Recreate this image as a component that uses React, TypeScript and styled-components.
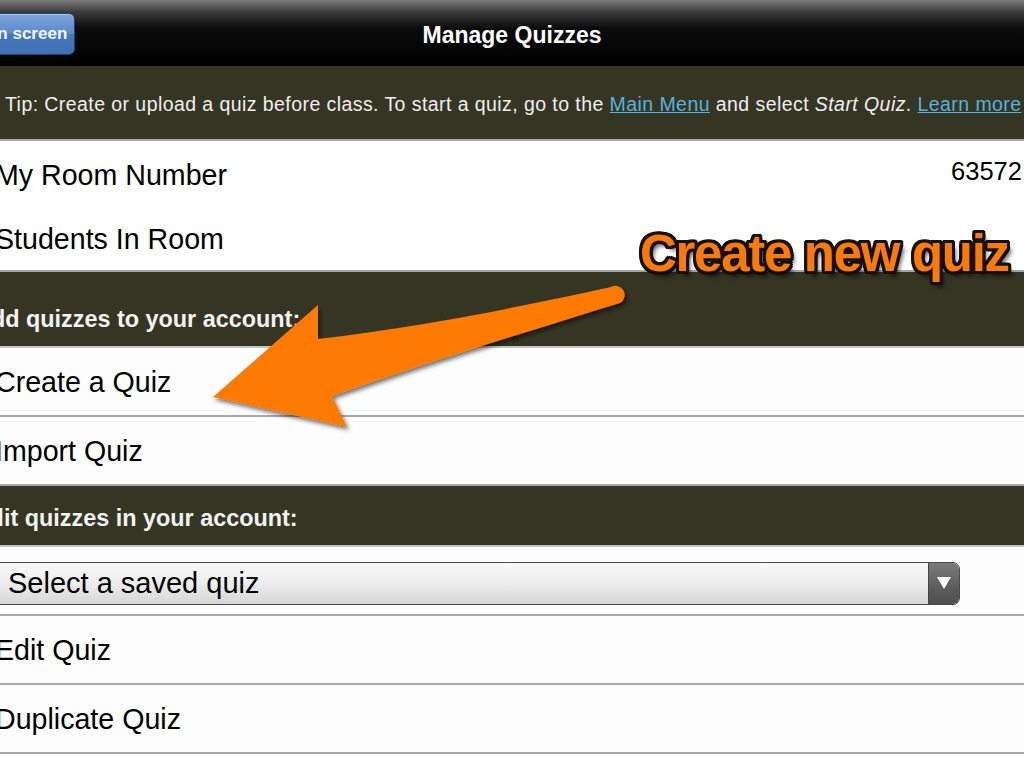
import React from "react";
import styled, { createGlobalStyle } from "styled-components";

const GlobalStyle = createGlobalStyle`
  html, body {
    margin: 0;
    padding: 0;
    background: #fff;
  }
  body {
    font-family: "Liberation Sans", Arial, sans-serif;
  }
`;

const olive = "#353523";

export default function App() {
  return (
    <Frame>
      <GlobalStyle />
      <TopBar>
        <BarSide>
          <BackButton>Main screen</BackButton>
        </BarSide>
        <Title>Manage Quizzes</Title>
        <BarSide />
      </TopBar>

      <TipBar>
        Tip: Create or upload a quiz before class. To start a quiz, go to the&nbsp;
        <TipLink>Main Menu</TipLink>&nbsp;and select&nbsp;<em>Start Quiz</em>.&nbsp;
        <TipLink>Learn more</TipLink>
      </TipBar>

      <InfoGroup>
        <InfoRow>
          <Label>My Room Number</Label>
          <Value>63572</Value>
        </InfoRow>
        <InfoRow>
          <Label>Students In Room</Label>
        </InfoRow>
      </InfoGroup>

      <SectionHeader $tall>Add quizzes to your account:</SectionHeader>
      <Row>
        <Label>Create a Quiz</Label>
      </Row>
      <Row>
        <Label>Import Quiz</Label>
      </Row>

      <SectionHeader>Edit quizzes in your account:</SectionHeader>
      <Row>
        <Select>
          <SelectText>Select a saved quiz</SelectText>
          <SelectArrow>
            <svg width="16" height="14" viewBox="0 0 16 14">
              <path d="M1 1 L15 1 L8 13 Z" fill="#fff" />
            </svg>
          </SelectArrow>
        </Select>
      </Row>
      <Row>
        <Label>Edit Quiz</Label>
      </Row>
      <Row>
        <Label>Duplicate Quiz</Label>
      </Row>

      <ArrowLayer viewBox="0 0 1024 768" width="1024" height="768">
        <defs>
          <filter id="shadow" x="-10%" y="-10%" width="130%" height="130%">
            <feDropShadow dx="2" dy="3" stdDeviation="2" floodColor="#000" floodOpacity="0.55" />
          </filter>
        </defs>
        <path
          d="M 611 287 C 520 307, 420 327, 318 339 L 318 305 L 213 397 L 347 427 L 332 396 C 430 361, 530 331, 620 303 A 8 8 0 0 0 611 287 Z"
          fill="#ff7a00"
          filter="url(#shadow)"
        />
      </ArrowLayer>
      <Callout>Create new quiz</Callout>
    </Frame>
  );
}

const Frame = styled.div`
  position: relative;
  width: 1024px;
  height: 768px;
  overflow: hidden;
  background: #fff;
`;

const TopBar = styled.header`
  height: 66px;
  box-sizing: border-box;
  padding-top: 4px;
  display: grid;
  grid-template-columns: 1fr auto 1fr;
  align-items: center;
  background: linear-gradient(#7c7c7c 0, #3c3c3c 12px, #0c0c0c 28px, #000 100%);
`;

const BarSide = styled.div`
  display: flex;
  align-items: center;
`;

const BackButton = styled.div`
  margin-left: -42px;
  height: 40px;
  margin-top: -2px;
  padding: 0 7px 0 10px;
  display: flex;
  align-items: center;
  border-radius: 6px;
  border: 1px solid #1f3f6e;
  background: linear-gradient(#7ea6dc 0%, #5a88c9 50%, #4677bd 51%, #3f6fb4 100%);
  color: #f4f8ff;
  font-size: 17px;
  font-weight: bold;
  box-shadow: inset 0 1px 0 rgba(255, 255, 255, 0.35);
`;

const Title = styled.h1`
  margin: 0;
  color: #fff;
  font-size: 23px;
  font-weight: bold;
`;

const TipBar = styled.div`
  height: 75px;
  box-sizing: border-box;
  padding: 4px 0 0 5px;
  display: flex;
  align-items: center;
  white-space: nowrap;
  background: ${olive};
  border-bottom: 2px solid #a9a9a9;
  color: #efefef;
  font-size: 19.5px;
  letter-spacing: 0.43px;

  em {
    font-style: italic;
  }
`;

const TipLink = styled.span`
  color: #52b4dc;
  text-decoration: underline;
`;

const InfoGroup = styled.section`
  background: #fff;
  border-bottom: 2px solid #a4a4a4;
`;

const InfoRow = styled.div`
  height: 64.5px;
  box-sizing: border-box;
  padding-top: 4px;
  display: flex;
  align-items: center;
  justify-content: space-between;
`;

const Label = styled.span`
  margin-left: -5px;
  color: #000;
  font-size: 28.6px;
  white-space: nowrap;
`;

const Value = styled.span`
  margin-right: 2px;
  margin-top: -8px;
  color: #000;
  font-size: 25.5px;
`;

const SectionHeader = styled.h2<{ $tall?: boolean }>`
  margin: 0;
  height: ${(p) => (p.$tall ? 76 : 61)}px;
  box-sizing: border-box;
  display: flex;
  align-items: flex-end;
  padding-bottom: 13px;
  text-indent: -26px;
  background: ${olive};
  border-bottom: 2px solid #c4c4c4;
  color: #f3f3f3;
  font-size: 23.4px;
  font-weight: bold;
  white-space: nowrap;
`;

const Row = styled.div`
  height: 69px;
  box-sizing: border-box;
  padding-top: 2px;
  display: flex;
  align-items: center;
  background: #fdfdfd;
  border-bottom: 2px solid #a8a8a8;
`;

const Select = styled.div`
  margin-left: -10px;
  margin-top: 3px;
  width: 970px;
  height: 43px;
  box-sizing: border-box;
  display: flex;
  border: 1px solid #4a4a4a;
  border-radius: 7px;
  overflow: hidden;
  background: linear-gradient(#fafafa 0%, #ececec 50%, #d6d6d6 100%);
`;

const SelectText = styled.span`
  flex: 1;
  display: flex;
  align-items: center;
  padding-left: 17px;
  color: #000;
  font-size: 29px;
`;

const SelectArrow = styled.span`
  width: 30px;
  display: flex;
  align-items: center;
  justify-content: center;
  border-left: 1px solid #444;
  background: linear-gradient(#7a7a7a 0%, #5c5c5c 60%, #4e4e4e 100%);
`;

const ArrowLayer = styled.svg`
  position: absolute;
  left: 0;
  top: 0;
  pointer-events: none;
`;

const Callout = styled.div`
  position: absolute;
  left: 640px;
  top: 224px;
  color: #ff7a00;
  font-size: 51px;
  font-weight: bold;
  letter-spacing: -1.3px;
  white-space: nowrap;
  text-shadow:
    3px 0 0 #111, -3px 0 0 #111, 0 3px 0 #111, 0 -3px 0 #111,
    2px 2px 0 #111, -2px 2px 0 #111, 2px -2px 0 #111, -2px -2px 0 #111,
    3px 2px 0 #111, -3px 2px 0 #111, 3px -2px 0 #111, -3px -2px 0 #111,
    2px 3px 0 #111, -2px 3px 0 #111, 2px -3px 0 #111, -2px -3px 0 #111,
    4px 5px 4px rgba(0, 0, 0, 0.6);
`;
